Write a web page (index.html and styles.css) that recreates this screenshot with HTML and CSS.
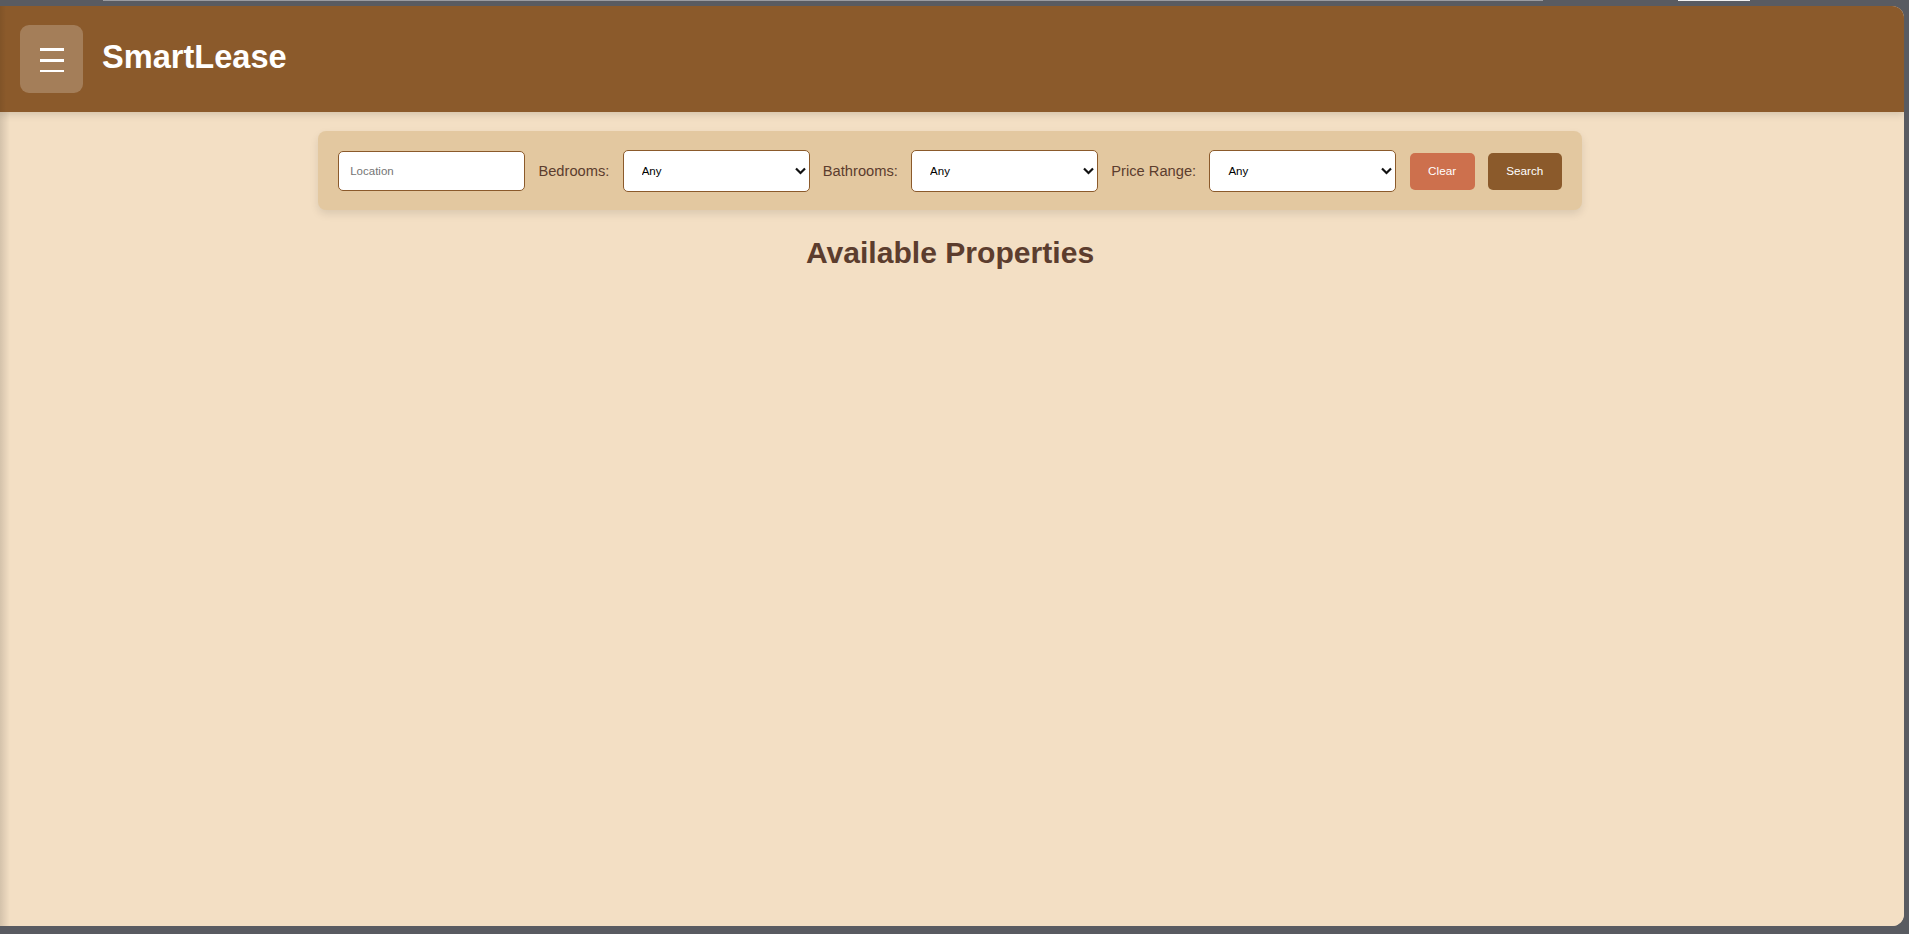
FILE: index.html
```html
<!DOCTYPE html>
<html lang="en">
<head>
<meta charset="utf-8">
<title>SmartLease</title>
<link rel="stylesheet" href="styles.css">
</head>
<body>
<div class="frame-top">
  <span class="frame-line"></span>
  <span class="frame-tab"></span>
</div>
<div class="app">
  <header class="header">
    <button class="menu-btn" aria-label="Menu">
      <svg width="24" height="26" viewBox="0 0 24 26">
        <rect x="0" y="2" width="24" height="3" fill="#fff"/>
        <rect x="0" y="13" width="24" height="3" fill="#fff"/>
        <rect x="0" y="24" width="24" height="2.5" fill="#fff"/>
      </svg>
    </button>
    <h1 class="brand">SmartLease</h1>
  </header>
  <main class="main">
    <div class="filters">
      <input class="field" type="text" placeholder="Location">
      <label class="filter-label">Bedrooms:</label>
      <div class="select-wrap">
        <select class="select"><option>Any</option></select>
        <svg class="chev" width="11" height="8" viewBox="0 0 11 8"><path d="M1 1.5 L5.5 6 L10 1.5" fill="none" stroke="#111" stroke-width="2.2"/></svg>
      </div>
      <label class="filter-label">Bathrooms:</label>
      <div class="select-wrap">
        <select class="select"><option>Any</option></select>
        <svg class="chev" width="11" height="8" viewBox="0 0 11 8"><path d="M1 1.5 L5.5 6 L10 1.5" fill="none" stroke="#111" stroke-width="2.2"/></svg>
      </div>
      <label class="filter-label">Price Range:</label>
      <div class="select-wrap">
        <select class="select"><option>Any</option></select>
        <svg class="chev" width="11" height="8" viewBox="0 0 11 8"><path d="M1 1.5 L5.5 6 L10 1.5" fill="none" stroke="#111" stroke-width="2.2"/></svg>
      </div>
      <button class="btn btn-clear">Clear</button>
      <button class="btn btn-search">Search</button>
    </div>
    <h2 class="section-title">Available Properties</h2>
  </main>
</div>
</body>
</html>
```
FILE: styles.css
```css
* { box-sizing: border-box; }

html, body {
  margin: 0;
  padding: 0;
}

body {
  width: 1909px;
  height: 934px;
  overflow: hidden;
  background: #595b61;
  font-family: "Liberation Sans", Arial, sans-serif;
}

.frame-top {
  height: 6px;
  display: flex;
  align-items: flex-start;
}

.frame-line {
  display: block;
  height: 1px;
  width: 1440px;
  margin-left: 103px;
  background: #9a9ba0;
}

.frame-tab {
  display: block;
  height: 1px;
  width: 72px;
  margin-left: 135px;
  background: #f2f2f2;
}

.app {
  width: 1904px;
  height: 920px;
  border-radius: 0 12px 12px 0;
  overflow: hidden;
  background: #f3dfc4;
  display: flex;
  flex-direction: column;
}

.header {
  position: relative;
  z-index: 1;
  height: 106px;
  flex: none;
  background: linear-gradient(to right, rgba(0,0,0,0.08), rgba(0,0,0,0) 6px), #8b5a2b;
  display: flex;
  align-items: center;
  padding-left: 20px;
  gap: 19px;
  box-shadow: 0 2px 8px rgba(0,0,0,0.15);
}

.menu-btn {
  width: 63px;
  height: 68px;
  border: none;
  border-radius: 9px;
  background: rgba(255,255,255,0.22);
  display: flex;
  align-items: center;
  justify-content: center;
  padding: 0;
}

.menu-btn svg { display: block; }

.brand {
  margin: 0 0 4px 0;
  color: #fff;
  font-size: 32.6px;
  font-weight: bold;
}

.main {
  flex: 1;
  padding: 19px 4px 0 0;
  background: linear-gradient(to right, rgba(0,0,0,0.13), rgba(0,0,0,0) 10px), #f3dfc4;
}

.filters {
  width: fit-content;
  margin: 0 auto;
  padding: 19px 20px 18px 20px;
  background: #e3c8a0;
  border-radius: 8px;
  box-shadow: 0 4px 8px rgba(0,0,0,0.1);
  display: flex;
  align-items: center;
  gap: 13.2px;
}

.field {
  width: 187px;
  height: 40px;
  border: 1px solid #8b5a2b;
  border-radius: 5px;
  background: #fff;
  padding: 0 11px;
  font-family: "Liberation Sans", Arial, sans-serif;
  font-size: 11.5px;
  color: #000;
}

.field::placeholder { color: #757575; }

.filter-label {
  font-size: 14.7px;
  color: #5c3d2e;
}

.select-wrap {
  position: relative;
  width: 187px;
  height: 42px;
}

.select {
  -webkit-appearance: none;
  appearance: none;
  width: 187px;
  height: 42px;
  border: 1px solid #8b5a2b;
  border-radius: 5px;
  background: #fff;
  padding: 0 20px 0 18px;
  font-family: "Liberation Sans", Arial, sans-serif;
  font-size: 11.5px;
  color: #000;
}

.chev {
  position: absolute;
  right: 4px;
  top: 17px;
  pointer-events: none;
}

.btn {
  height: 37px;
  border: none;
  border-radius: 5px;
  color: #fff;
  font-family: "Liberation Sans", Arial, sans-serif;
  font-size: 11.7px;
  padding: 0 0 1px 0;
}

.btn-clear {
  width: 65px;
  background: #cd704d;
}

.btn-search {
  width: 74px;
  background: #8b5a2b;
}

.section-title {
  margin: 26px 0 0 0;
  text-align: center;
  font-size: 30.1px;
  font-weight: bold;
  color: #5c3d2e;
}
```
